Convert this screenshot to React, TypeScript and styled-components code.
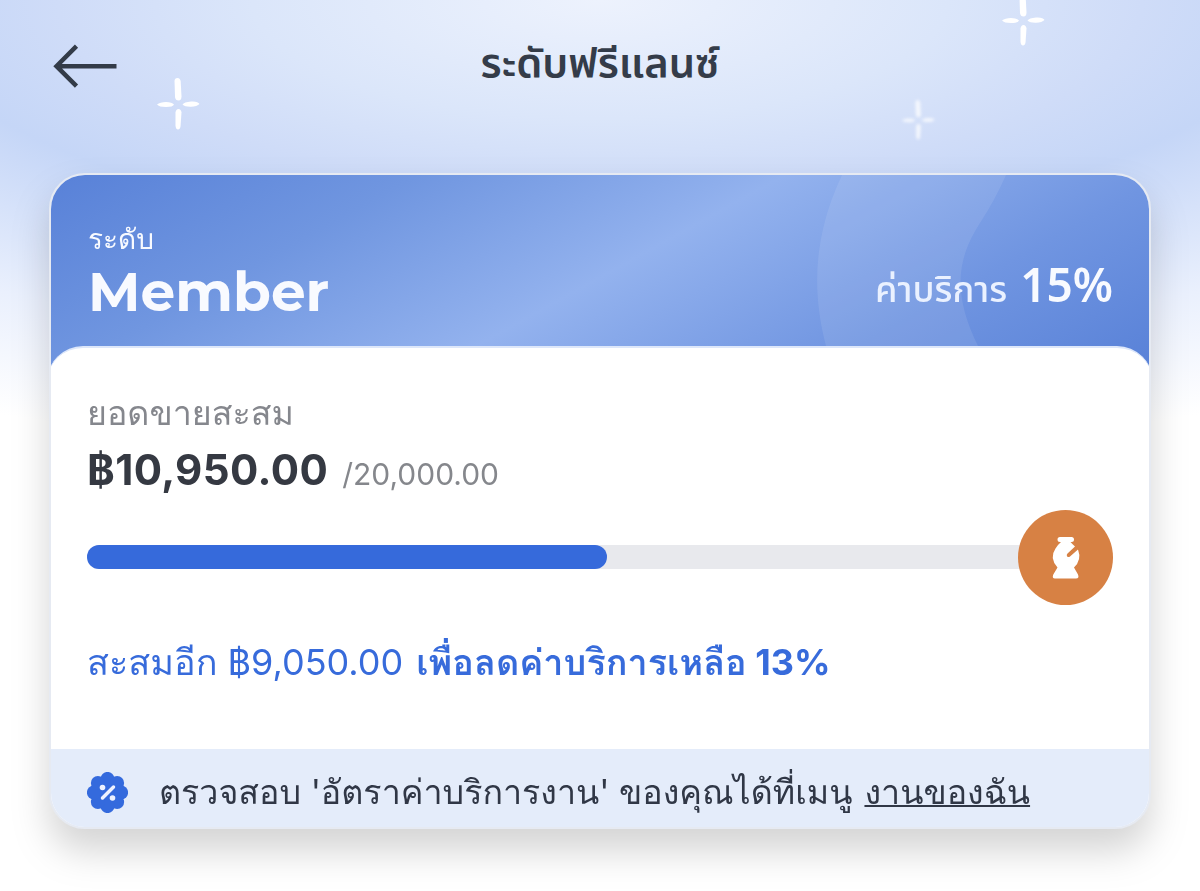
import React from "react";
import styled, { createGlobalStyle } from "styled-components";

const looped = 'Inter, Loma, "Noto Sans Thai Looped", "Noto Sans", sans-serif';
const loopless = '"Noto Sans", "Noto Sans Thai UI", "Noto Sans Thai", sans-serif';
const title = 'Inter, "Noto Sans Thai", "Noto Sans", sans-serif';

const GlobalStyle = createGlobalStyle`
  *, *::before, *::after { box-sizing: border-box; }
  body { margin: 0; background: #fff; font-family: ${looped}; }
`;

const Screen = styled.div`
  position: relative;
  width: 1200px;
  height: 891px;
  overflow: hidden;
  background: radial-gradient(
    ellipse 695px 237px at 600px 0,
    #edf2fd 0%,
    #dbe6fa 50%,
    #cfdcf8 78%,
    #c5d6f7 100%,
    #d6e2fa 122%,
    #eaf0fd 150%,
    #ffffff 195%
  ), #fff;
`;

const Header = styled.header`
  display: grid;
  grid-template-columns: 64px 1fr 64px;
  align-items: center;
  height: 173px;
  padding: 0 53px 41px;
`;

const BackButton = styled.button`
  display: block;
  width: 64px;
  height: 44px;
  padding: 0;
  border: 0;
  background: none;
`;

const Line = styled.span<{ $size: number; $weight?: number; $spacing?: number; $color?: string; $font?: string; $underlined?: boolean }>`
  display: inline-block;
  white-space: pre;
  line-height: 1;
  font-family: ${(p) => p.$font ?? looped};
  font-size: ${(p) => p.$size}px;
  font-weight: ${(p) => p.$weight ?? 400};
  letter-spacing: ${(p) => p.$spacing ?? 0}px;
  color: ${(p) => p.$color ?? "inherit"};
  text-decoration: ${(p) => (p.$underlined ? "underline 2px" : "none")};
  text-decoration-skip-ink: none;
  text-underline-offset: 1px;
`;

const Title = styled.h1`
  margin: -5px 0 0;
  text-align: center;
  color: #343c49;
  line-height: 1;
`;

const Sparkle = styled.svg<{ $x: number; $y: number; $w: number; $soft?: boolean }>`
  position: absolute;
  left: ${(p) => p.$x}px;
  top: ${(p) => p.$y}px;
  width: ${(p) => p.$w}px;
  fill: #fff;
  opacity: ${(p) => (p.$soft ? 0.75 : 1)};
  filter: ${(p) => (p.$soft ? "blur(1.8px)" : "none")};
`;

const Card = styled.main`
  width: 1102px;
  height: 656px;
  margin: 0 49px;
  border: 2px solid #e6eaf2;
  border-radius: 36px;
  overflow: hidden;
  background: #fff;
`;

const CardShadow = styled.div`
  width: 1200px;
  filter: drop-shadow(0 22px 18px rgba(0, 0, 0, 0.17));
`;

const Band = styled.section`
  position: relative;
  height: 205px;
  padding: 50px 36px 0 37px;
  display: flex;
  justify-content: space-between;
  color: #f8faff;
  background: linear-gradient(151deg, #5881d8 0%, #7096e0 25%, #93b2ee 50%, #7095e1 76%, #5780d7 100%);
`;

const Wave = styled.svg`
  position: absolute;
  left: 760px;
  top: 0;
`;

const Level = styled.div`
  display: flex;
  flex-direction: column;
  align-items: flex-start;
  gap: 11px;
`;

const Fee = styled.div`
  position: relative;
  display: flex;
  align-items: baseline;
  gap: 13px;
  margin-top: 36px;
  height: 60px;
`;

const Body = styled.section`
  position: relative;
  height: 403px;
  margin: -34px -4px 0;
  padding: 48px 40px 0;
  border-top: 2px solid #dde7fa;
  border-radius: 36px 36px 0 0;
  background: #fff;
`;

const AmountRow = styled.div`
  display: flex;
  align-items: baseline;
  gap: 14px;
  margin-top: 19px;
`;

const Progress = styled.div`
  display: flex;
  align-items: center;
  height: 96px;
  margin-top: 18px;
`;

const Track = styled.div`
  flex: 1;
  height: 24px;
  margin-right: -12px;
  border-radius: 12px;
  background: #e8e9ed;
`;

const Fill = styled.div`
  height: 100%;
  border-radius: 12px;
  background: #366adb;
`;

const Badge = styled.div`
  position: relative;
  width: 95px;
  height: 95px;
  border-radius: 50%;
  background: #d78144;
`;

const Goal = styled.p`
  display: flex;
  align-items: baseline;
  gap: 13px;
  margin: 39px 0 0;
  color: #376bdb;
`;

const Notice = styled.footer`
  display: flex;
  align-items: center;
  gap: 31px;
  height: 80px;
  padding: 6px 36px 0;
  color: #303746;
  background: #e4ecfa;
`;

const NoticeText = styled.p`
  display: flex;
  align-items: baseline;
  gap: 12px;
  margin: 0;
`;

const MenuLink = styled.a`
  color: inherit;
`;

const SparkleShape = () => (
  <>
    <path d="M17.500 3Q17.700 0 20.500 0T23.700 3.500L24.500 18.500Q24.500 22.500 21.500 22.500T18 19Z" />
    <path d="M18.500 34.500Q19 31 21.500 31T24.500 34.500L23.500 48.500Q23 51.500 21 51.500T18.500 48Z" />
    <path d="M0 26.500Q3 24 9 24T17 26.500Q16 29 9 29T0 26.500Z" />
    <path d="M25.500 26.500Q27 24 34 23.500T42.500 26Q40 28.500 34 28.700T25.500 26.500Z" />
  </>
);

const petals = Array.from({ length: 8 }, (_, i) => {
  const a = (i * Math.PI) / 4 - Math.PI / 2;
  return { x: 20.500 + 13.600 * Math.cos(a), y: 20.500 + 13.600 * Math.sin(a) };
});

export default function App() {
  const percent = 55.100;
  return (
    <>
      <GlobalStyle />
      <Screen>
        <Sparkle $x={156.500} $y={77.500} $w={43} viewBox="0 0 43 52"><SparkleShape /></Sparkle>
        <Sparkle $x={1001.500} $y={-6} $w={43} viewBox="0 0 43 52"><SparkleShape /></Sparkle>
        <Sparkle $x={902} $y={100} $w={33} $soft viewBox="0 0 43 52" overflow="visible"><SparkleShape /></Sparkle>
        <Header>
          <BackButton aria-label="Back">
            <svg width="64" height="44" viewBox="0 0 64 44" fill="none" stroke="#333b48" strokeWidth="4.500">
              <path d="M63.500 22.200H4M23.500 2.200L3.500 22.200L23.500 42.200" />
            </svg>
          </BackButton>
          <Title><Line $size={41.700} $weight={600} $font={title}>ระดับฟรีแลนซ์</Line></Title>
        </Header>
        <CardShadow>
          <Card>
            <Band>
              <Wave width="260" height="205" viewBox="0 0 260 205">
                <path d="M31 0C5 55-1 110 15 171V205H190L167 171C142 120 145 85 169 48Q184 25 195 0Z" fill="#fff" fillOpacity=".09" />
              </Wave>
              <Level>
                <Line $size={28}>ระดับ</Line>
                <Line $size={55} $weight={700} $font="Montserrat, Inter, sans-serif">Member</Line>
              </Level>
              <Fee>
                <Line $size={36} $weight={500} $color="#eaf1ff" $font={title}>ค่าบริการ</Line>
                <Line $size={46} $weight={600} $font={loopless}>15%</Line>
              </Fee>
            </Band>
            <Body>
              <Line $size={34} $color="#85878d">ยอดขายสะสม</Line>
              <AmountRow>
                <Line $size={42} $weight={700} $spacing={0.400} $color="#353942">฿10,950.00</Line>
                <Line $size={30} $color="#85878c">/20,000.00</Line>
              </AmountRow>
              <Progress>
                <Track><Fill style={{ width: `${percent}%` }} /></Track>
                <Badge>
                  <svg width="95" height="95" viewBox="0 0 95 95" fill="#fff">
                    <path d="M42 27H53.500Q56 27 56 29.500T53.500 32H52.500Q54 33.500 57 36.500L49.500 43.500Q48 45.200 49.200 46.400T52 46.500L60 39.500Q64 50 56 57.500L60 64.500Q61.500 68.500 58 68.500H37Q33.700 68.500 35.300 64.500L39.500 57.500Q31 48 37.500 38.500Q40 34.500 43 32H42Q39.500 32 39.500 29.500T42 27Z" />
                  </svg>
                </Badge>
              </Progress>
              <Goal>
                <Line $size={36}>สะสมอีก ฿9,050.00</Line>
                <Line $size={36} $weight={700}>เพื่อลดค่าบริการเหลือ 13%</Line>
              </Goal>
            </Body>
            <Notice>
              <svg width="41" height="41" viewBox="0 0 41 41" fill="#346add">
                <circle cx="20.500" cy="20.500" r="16" />
                {petals.map((p, i) => <circle key={i} cx={p.x} cy={p.y} r="7" />)}
                <path d="M15.500 26L26.500 15" stroke="#edf2ff" strokeWidth="3.500" strokeLinecap="round" />
                <circle cx="15.500" cy="15.500" r="2.800" fill="#edf2ff" />
                <circle cx="25.500" cy="26" r="2.800" fill="#edf2ff" />
              </svg>
              <NoticeText>
                <Line $size={34}>ตรวจสอบ 'อัตราค่าบริการงาน' ของคุณได้ที่เมนู</Line>
                <MenuLink><Line $size={34} $underlined>งานของฉัน</Line></MenuLink>
              </NoticeText>
            </Notice>
          </Card>
        </CardShadow>
      </Screen>
    </>
  );
}
